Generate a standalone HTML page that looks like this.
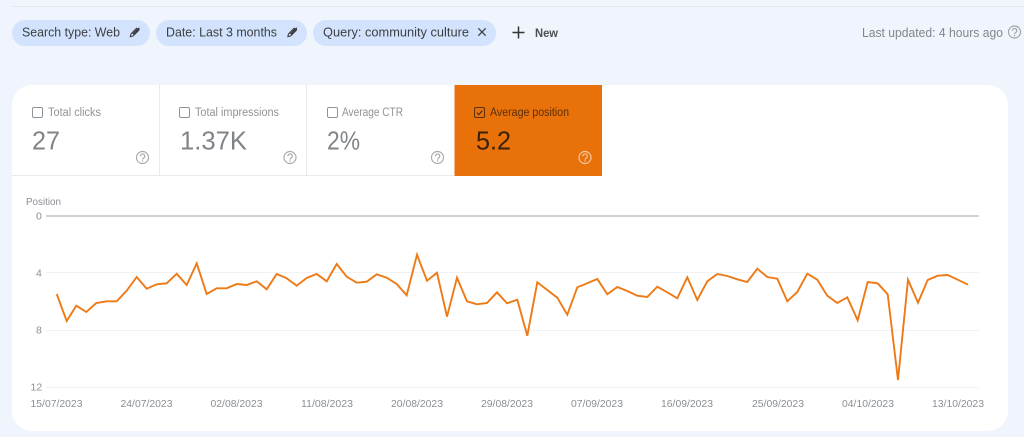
<!DOCTYPE html>
<html><head><meta charset="utf-8"><style>
html,body{margin:0;padding:0;background:#f0f4fc;width:1024px;height:437px;overflow:hidden}
svg{display:block;filter:blur(.3px)}
text{font-family:"Liberation Sans",sans-serif}
</style></head><body>
<svg width="1024" height="437" viewBox="0 0 1024 437" xmlns="http://www.w3.org/2000/svg">
<defs>
<g id="help"><circle cx="0" cy="0" r="6" fill="none" stroke="currentColor" stroke-width="1.2"/><path d="M-2.1-1.3A2.2 2.2 0 1 1 1.3.5C.5 1 0 1.3 0 2.1" fill="none" stroke="currentColor" stroke-width="1.2"/><circle cx="0" cy="3.5" r=".75" fill="currentColor"/></g>
<g id="pencil"><path d="M-4.6 4.6L-4 1.9L1.6-3.7L3.7-1.6L-1.9 4Z" fill="none" stroke="#3c4043" stroke-width="1.1"/><path d="M-2.8 1.6L2.4-3.6L4.4-4.6L4.6-2.4L-.9 3Z" fill="#3c4043"/></g>
</defs>
<rect x="12" y="6" width="1012" height="1" fill="#e4e7ec"/>
<g fill="#d3e3fd">
<rect x="12" y="20" width="138" height="26" rx="13"/>
<rect x="156" y="20" width="151" height="26" rx="13"/>
<rect x="313" y="20" width="183" height="26" rx="13"/>
</g>
<g font-size="12.5" fill="#3c4043">
<text x="22" y="36.5" textLength="98" lengthAdjust="spacingAndGlyphs">Search type: Web</text>
<text x="166" y="36.5" textLength="111" lengthAdjust="spacingAndGlyphs">Date: Last 3 months</text>
<text x="323" y="36.5" textLength="146" lengthAdjust="spacingAndGlyphs">Query: community culture</text>
<text x="535" y="37" font-size="11.5" font-weight="bold" fill="#4c4f52" textLength="23" lengthAdjust="spacingAndGlyphs">New</text>
</g>
<use href="#pencil" x="135" y="32"/>
<use href="#pencil" x="292.5" y="32"/>
<path d="M478.3 28.3l7.4 7.4M485.7 28.3l-7.4 7.4" stroke="#3c4043" stroke-width="1.3" fill="none"/>
<path d="M518.5 26.5v12M512.5 32.5h12" stroke="#333" stroke-width="1.5" fill="none"/>
<text x="862" y="37" font-size="12.5" fill="#80868b" textLength="141" lengthAdjust="spacingAndGlyphs">Last updated: 4 hours ago</text>
<use href="#help" x="1014.5" y="32" color="#a0a5aa"/>

<path d="M32 85H988a20 20 0 0 1 20 20V411a20 20 0 0 1-20 20H32a20 20 0 0 1-20-20V105a20 20 0 0 1 20-20Z" fill="#fff"/>
<rect x="12" y="175" width="590" height="1" fill="#e8eaed"/>
<rect x="159" y="85" width="1" height="90" fill="#e8eaed"/>
<rect x="306" y="85" width="1" height="90" fill="#e8eaed"/>
<rect x="454.5" y="85" width="147.5" height="91" fill="#e8710a"/>

<g fill="none" stroke="#8f9498" stroke-width="1">
<rect x="32.5" y="107.5" width="10" height="10" rx="1.5"/>
<rect x="179.5" y="107.5" width="10" height="10" rx="1.5"/>
<rect x="327.5" y="107.5" width="10" height="10" rx="1.5"/>
</g>
<rect x="474.5" y="107.5" width="10" height="10" rx="1.5" fill="none" stroke="#5c2f08"/>
<path d="M476.8 112.6l2 2 3.6-4" fill="none" stroke="#4a2606" stroke-width="1.1"/>
<g font-size="11.5" fill="#8f9397">
<text x="48" y="116" textLength="53" lengthAdjust="spacingAndGlyphs">Total clicks</text>
<text x="195" y="116" textLength="84" lengthAdjust="spacingAndGlyphs">Total impressions</text>
<text x="342" y="116" textLength="61" lengthAdjust="spacingAndGlyphs">Average CTR</text>
<text x="490" y="116" fill="#5c2f08" textLength="79" lengthAdjust="spacingAndGlyphs">Average position</text>
</g>
<g font-size="26" fill="#808488">
<text x="32" y="149.5" textLength="28" lengthAdjust="spacingAndGlyphs">27</text>
<text x="180" y="149.5" textLength="67" lengthAdjust="spacingAndGlyphs">1.37K</text>
<text x="327" y="149.5" textLength="33" lengthAdjust="spacingAndGlyphs">2%</text>
<text x="476" y="149.5" fill="#3a2208" textLength="35" lengthAdjust="spacingAndGlyphs">5.2</text>
</g>
<use href="#help" x="142.5" y="157.5" color="#a8acb0"/>
<use href="#help" x="290" y="157.5" color="#a8acb0"/>
<use href="#help" x="437.5" y="157.5" color="#a8acb0"/>
<use href="#help" x="585" y="157.5" color="#f7c9a0"/>

<rect x="46" y="215" width="933" height="2" fill="#d0d2d4"/>
<g fill="#f1f2f3">
<rect x="46" y="272" width="933" height="1"/>
<rect x="46" y="330" width="933" height="1"/>
<rect x="46" y="387" width="933" height="1"/>
</g>
<g font-size="10.5" fill="#8a8f94">
<text x="26" y="205" textLength="35" lengthAdjust="spacingAndGlyphs">Position</text>
<text x="36" y="219.5">0</text>
<text x="36" y="276.5">4</text>
<text x="36" y="333.5">8</text>
<text x="30.5" y="390.5">12</text>
</g>
<g font-size="10.5" fill="#8a8f94">
<text x="30.5" y="407" textLength="52" lengthAdjust="spacingAndGlyphs">15/07/2023</text>
<text x="120.5" y="407" textLength="52" lengthAdjust="spacingAndGlyphs">24/07/2023</text>
<text x="210.5" y="407" textLength="52" lengthAdjust="spacingAndGlyphs">02/08/2023</text>
<text x="301" y="407" textLength="52" lengthAdjust="spacingAndGlyphs">11/08/2023</text>
<text x="391" y="407" textLength="52" lengthAdjust="spacingAndGlyphs">20/08/2023</text>
<text x="481" y="407" textLength="52" lengthAdjust="spacingAndGlyphs">29/08/2023</text>
<text x="571" y="407" textLength="52" lengthAdjust="spacingAndGlyphs">07/09/2023</text>
<text x="661" y="407" textLength="52" lengthAdjust="spacingAndGlyphs">16/09/2023</text>
<text x="752" y="407" textLength="52" lengthAdjust="spacingAndGlyphs">25/09/2023</text>
<text x="842" y="407" textLength="52" lengthAdjust="spacingAndGlyphs">04/10/2023</text>
<text x="932" y="407" textLength="52" lengthAdjust="spacingAndGlyphs">13/10/2023</text>
</g>
<polyline fill="none" stroke="#ee7a16" stroke-width="1.9" stroke-linejoin="miter" points="56.7,294 66.7,321 76.3,305.7 86.3,312 96.3,303 106.7,301.3 116.7,301.3 126.7,290.7 136.7,277 146.7,288.7 156.7,284.3 166.7,283.3 176.7,273.7 186.7,285 196.7,263.3 206.7,294 216.7,288.3 226.7,288.3 236.7,284 246.7,285 256.7,281.3 266.7,289.3 276.7,274 286.7,278.3 296.7,285.7 306.7,278 316.7,274 326.7,281.3 336.7,264 346.7,276.7 356.7,282.7 366.7,281.7 376.7,274.3 386.7,277.7 396.7,284 406.7,295.3 417,254.7 427,280.7 437,272.7 447,316.7 457,277.7 467,301.3 477,304.3 487,303 497,292.3 507,303.3 517.3,299.7 527.3,335.7 537.3,282.3 547.3,290 557.3,297.7 567.3,314.7 577.3,287.3 587.3,283.3 597.3,279 607.3,294.3 617.3,287 627.3,291 637.3,295.7 647.3,297 657.3,286.7 667.3,292.3 677.3,298.3 687.3,277.3 697.3,300 707.3,281.3 717.3,274 727.3,276 737.3,279.3 747.3,282 757.3,268.7 767.3,277 777.3,278.7 787.3,301.3 797.3,292 807.3,273.7 817.3,279.7 827.3,295.7 837.3,303 847.3,297.3 857.7,320.3 867.7,282 877.7,283.3 887.7,294.3 898,380 908,279.7 918,302.7 927.7,280 937.7,275.7 947.7,275 957.7,279.7 968,284.7"/>
</svg>
</body></html>
